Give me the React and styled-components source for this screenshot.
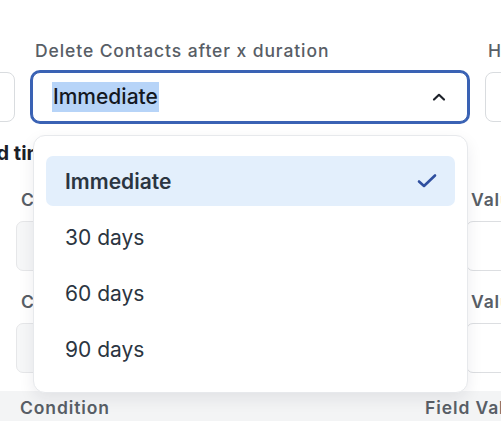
import React from 'react';
import styled, { createGlobalStyle } from 'styled-components';

const GlobalStyle = createGlobalStyle`
  body {
    margin: 0;
    background: #ffffff;
    font-family: Inter, "Noto Sans", Arial, sans-serif;
  }
`

const Viewport = styled.div`
  position: relative;
  width: 501px;
  height: 421px;
  overflow: hidden;
  background: #ffffff;
`

// the screenshot is a crop of a wider settings form
const Canvas = styled.div`
  width: 1000px;
  margin-left: -185px;
  padding-top: 40px;
`

const FieldRow = styled.div`
  display: grid;
  grid-template-columns: 200px 436px 200px;
  column-gap: 17px;
`

const Field = styled.div`
  position: relative;
  display: flex;
  flex-direction: column;
  gap: 10px;
`

const Label = styled.div`
  padding-left: 3px;
  font-size: 17.5px;
  line-height: 22px;
  font-weight: 500;
  letter-spacing: 0.9px;
  color: #585e66;
  white-space: nowrap;
`

const Box = styled.div`
  box-sizing: border-box;
  height: 50px;
  border: 1px solid #d9dcdf;
  border-radius: 8px;
  background: #ffffff;
`

const SelectBox = styled.div`
  box-sizing: border-box;
  height: 50px;
  display: flex;
  align-items: center;
  justify-content: space-between;
  padding: 0 20px 0 19px;
  border: 1px solid #3a62b4;
  box-shadow: 0 0 0 2px #3a62b4;
  border-radius: 8px;
  background: #ffffff;
`

const SelectedText = styled.span`
  font-size: 21px;
  line-height: 30px;
  font-weight: 500;
  color: #14181f;
  background: ${props => props.highlighted ? "#b7d4f8" : "transparent"};
  padding: 0 1px;
`

const Menu = styled.div`
  position: absolute;
  top: 95px;
  left: 1px;
  width: 435px;
  box-sizing: border-box;
  padding: 20px 12px 18px;
  display: flex;
  flex-direction: column;
  gap: 6px;
  background: #ffffff;
  border: 1px solid #e7e9ec;
  border-radius: 12px;
  box-shadow: 0 6px 16px rgba(20, 30, 50, 0.08);
  z-index: 5;
`

const Option = styled.div`
  height: 50px;
  display: flex;
  align-items: center;
  justify-content: space-between;
  padding: 0 18px 0 19px;
  border-radius: 7px;
  background: ${props => props.selected ? "#e3effc" : "transparent"};
  font-size: 21px;
  font-weight: ${props => props.selected ? 600 : 400};
  color: #2b3541;
`

const Section = styled.div`
  margin-top: 18px;
`

const SectionTitle = styled.div`
  padding-left: 147px;
  font-size: 20px;
  line-height: 26px;
  font-weight: 700;
  color: #1b2028;
  white-space: nowrap;
`

const RuleList = styled.div`
  margin-top: 23px;
  padding-left: 201px;
  display: flex;
  flex-direction: column;
  gap: 20px;
`

const RuleRow = styled.div`
  display: grid;
  grid-template-columns: 210px 210px 260px;
  column-gap: 15px;
`

const RuleField = styled.div`
  display: flex;
  flex-direction: column;
  gap: 10px;
`

const RuleLabel = styled(Label)`
  padding-left: 5px;
  font-weight: 600;
`

const RuleBox = styled.div`
  box-sizing: border-box;
  height: 50px;
  border: 1px solid ${props => props.disabled ? "#e6e7e9" : "#dcdee1"};
  border-radius: 7px;
  background: ${props => props.disabled ? "#f6f7f8" : "#ffffff"};
`

const HeaderBar = styled.div`
  margin-top: 18px;
  padding: 6px 0 8px 205px;
  display: grid;
  grid-template-columns: 405px 1fr;
  background: #f3f4f5;
`

const HeaderCell = styled.div`
  font-size: 17.5px;
  line-height: 22px;
  font-weight: 600;
  letter-spacing: 0.9px;
  color: #585e66;
  white-space: nowrap;
`

const ChevronUp = () => (
  <svg width="16" height="16" viewBox="0 0 16 16" fill="none">
    <path d="M3 10.5 L8 5.8 L13 10.5" stroke="#1d2129" strokeWidth="2.2" strokeLinecap="round" strokeLinejoin="round" />
  </svg>
)

const Check = () => (
  <svg width="20" height="16" viewBox="0 0 20 16" fill="none">
    <path d="M2 8.5 L7 13 L18 2.5" stroke="#2f4f9f" strokeWidth="2.6" strokeLinecap="round" strokeLinejoin="round" />
  </svg>
)

const options = ['Immediate', '30 days', '60 days', '90 days']

const rules = [1, 2]

export default function App() {
  const selected = 'Immediate'
  return (
    <Viewport>
      <GlobalStyle />
      <Canvas>
        <FieldRow>
          <Field>
            <Label>Delete Leads after</Label>
            <Box />
          </Field>
          <Field>
            <Label>Delete Contacts after x duration</Label>
            <SelectBox>
              <SelectedText highlighted>{selected}</SelectedText>
              <ChevronUp />
            </SelectBox>
            <Menu>
              {options.map(o => (
                <Option key={o} selected={o === selected}>
                  <span>{o}</span>
                  {o === selected ? <Check /> : null}
                </Option>
              ))}
            </Menu>
          </Field>
          <Field>
            <Label>Hold period</Label>
            <Box />
          </Field>
        </FieldRow>

        <Section>
          <SectionTitle>Field timing rules</SectionTitle>
          <RuleList>
            {rules.map(r => (
              <RuleRow key={r}>
                <RuleField>
                  <RuleLabel>Condition</RuleLabel>
                  <RuleBox disabled />
                </RuleField>
                <RuleField>
                  <RuleLabel>Field</RuleLabel>
                  <RuleBox />
                </RuleField>
                <RuleField>
                  <RuleLabel>Value</RuleLabel>
                  <RuleBox />
                </RuleField>
              </RuleRow>
            ))}
          </RuleList>
          <HeaderBar>
            <HeaderCell>Condition</HeaderCell>
            <HeaderCell>Field Value</HeaderCell>
          </HeaderBar>
        </Section>
      </Canvas>
    </Viewport>
  )
}
